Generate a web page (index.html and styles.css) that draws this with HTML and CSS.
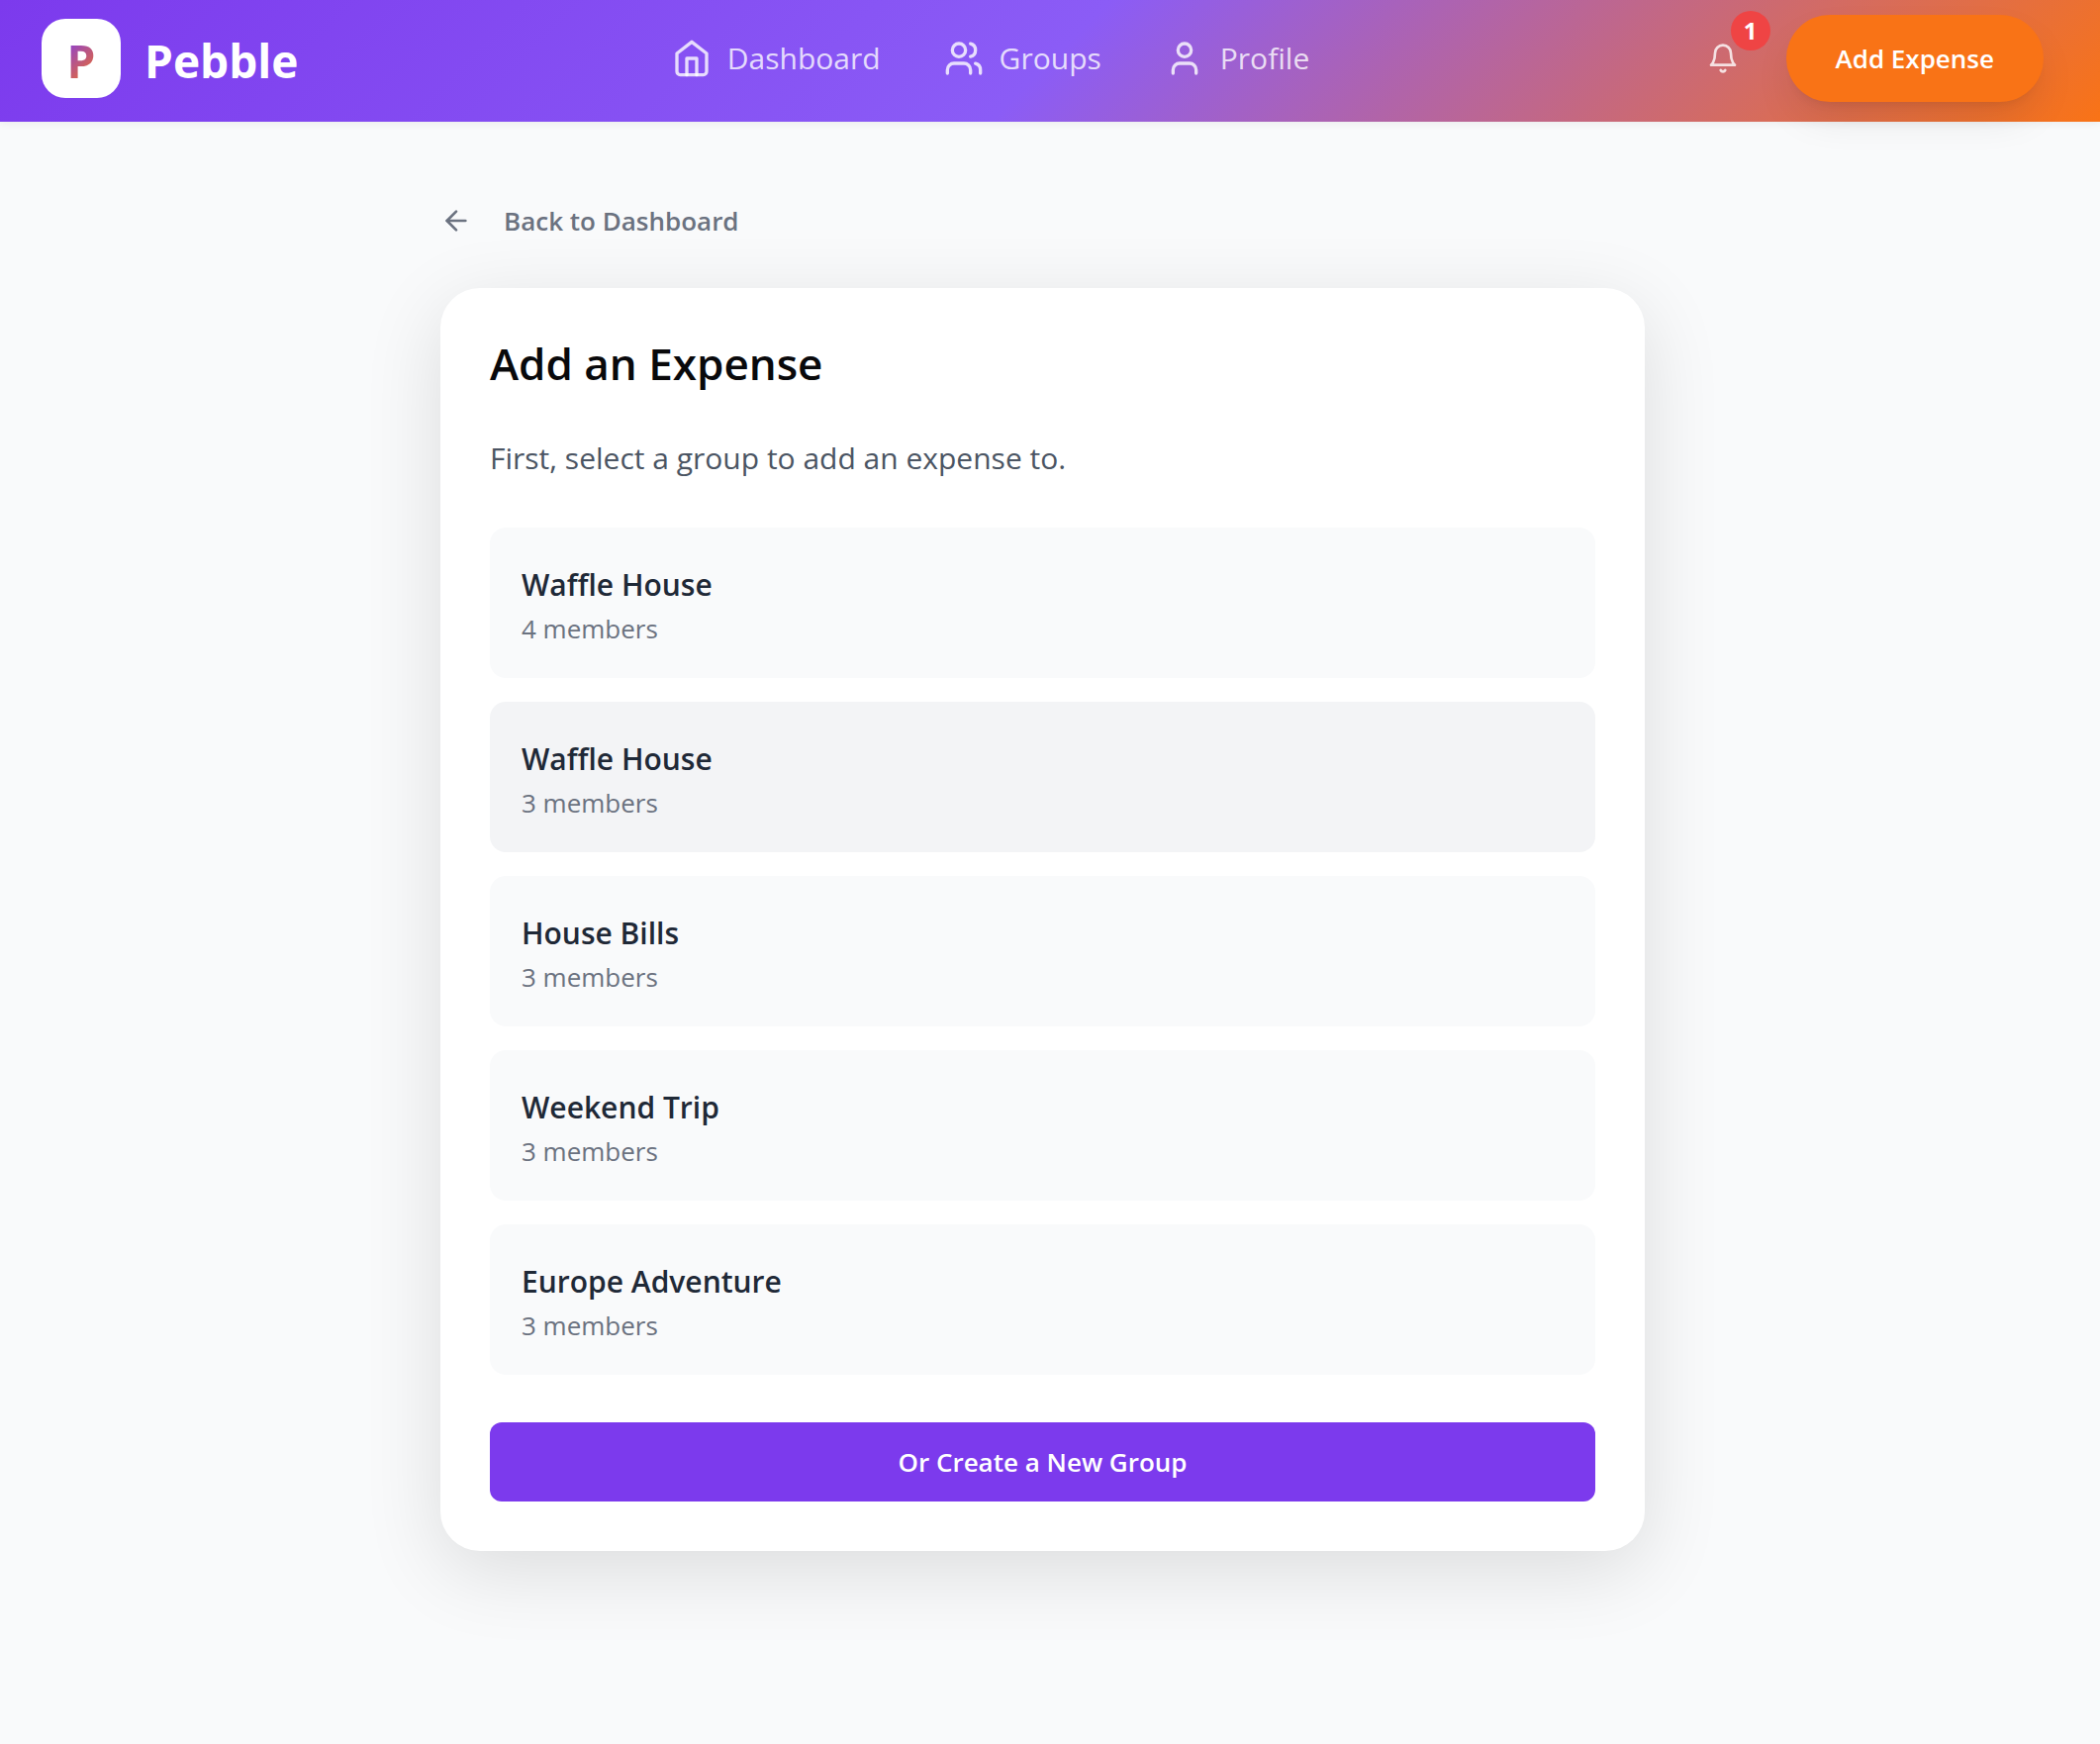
FILE: index.html
```html
<!DOCTYPE html>
<html lang="en">
<head>
  <meta charset="UTF-8" />
  <meta name="viewport" content="width=device-width, initial-scale=1.0"/>
  <title>Pebble - Add an Expense</title>
  <link rel="stylesheet" href="styles.css">
</head>
<body>
  <header class="navbar">
    <a class="brand" href="#">
      <span class="brand-mark"><span class="brand-letter">P</span></span>
      <span class="brand-name">Pebble</span>
    </a>

    <nav class="nav-links">
      <a href="#">
        <svg class="icon" viewBox="0 0 24 24" aria-hidden="true"><path d="m3 9 9-7 9 7v11a2 2 0 0 1-2 2H5a2 2 0 0 1-2-2z"/><polyline points="9 22 9 12 15 12 15 22"/></svg>
        Dashboard
      </a>
      <a href="#">
        <svg class="icon" viewBox="0 0 24 24" aria-hidden="true"><path d="M16 21v-2a4 4 0 0 0-4-4H6a4 4 0 0 0-4 4v2"/><circle cx="9" cy="7" r="4"/><path d="M22 21v-2a4 4 0 0 0-3-3.87"/><path d="M16 3.13a4 4 0 0 1 0 7.75"/></svg>
        Groups
      </a>
      <a href="#">
        <svg class="icon" viewBox="0 0 24 24" aria-hidden="true"><path d="M19 21v-2a4 4 0 0 0-4-4H9a4 4 0 0 0-4 4v2"/><circle cx="12" cy="7" r="4"/></svg>
        Profile
      </a>
    </nav>

    <div class="nav-actions">
      <button class="bell" type="button" aria-label="Notifications">
        <svg class="icon icon-sm" viewBox="0 0 24 24" aria-hidden="true"><path d="M6 8a6 6 0 0 1 12 0c0 7 3 9 3 9H3s3-2 3-9"/><path d="M10.3 21a1.94 1.94 0 0 0 3.4 0"/></svg>
        <span class="badge">1</span>
      </button>
      <button class="btn-expense" type="button">Add Expense</button>
    </div>
  </header>

  <main class="page">
    <div class="content">
      <a class="back-link" href="#">
        <svg class="icon icon-sm" viewBox="0 0 24 24" aria-hidden="true"><path d="m12 19-7-7 7-7"/><path d="M19 12H5"/></svg>
        Back to Dashboard
      </a>

      <section class="card">
        <h1>Add an Expense</h1>
        <p class="intro">First, select a group to add an expense to.</p>

        <div class="group-list">
          <button class="group" type="button">
            <span class="group-name">Waffle House</span>
            <span class="group-members">4 members</span>
          </button>
          <button class="group active" type="button">
            <span class="group-name">Waffle House</span>
            <span class="group-members">3 members</span>
          </button>
          <button class="group" type="button">
            <span class="group-name">House Bills</span>
            <span class="group-members">3 members</span>
          </button>
          <button class="group" type="button">
            <span class="group-name">Weekend Trip</span>
            <span class="group-members">3 members</span>
          </button>
          <button class="group" type="button">
            <span class="group-name">Europe Adventure</span>
            <span class="group-members">3 members</span>
          </button>
        </div>

        <button class="btn-create" type="button">Or Create a New Group</button>
      </section>
    </div>
  </main>
</body>
</html>
```

FILE: styles.css
```css
* {
  box-sizing: border-box;
}
body {
  margin: 0;
  font-family: "Segoe UI", "Open Sans", "Noto Sans", sans-serif;
  font-size: 30px;
  line-height: 48px;
  background: #f9fafb;
  color: #09090b;
}
a {
  color: inherit;
  text-decoration: none;
}
button {
  font: inherit;
  color: inherit;
  border: none;
  padding: 0;
  background: none;
  cursor: pointer;
}
.icon {
  width: 40px;
  height: 40px;
  flex: none;
  fill: none;
  stroke: currentColor;
  stroke-width: 2;
  stroke-linecap: round;
  stroke-linejoin: round;
}
.icon-sm {
  width: 32px;
  height: 32px;
}

/* Navbar */
.navbar {
  display: flex;
  align-items: center;
  justify-content: space-between;
  min-height: 123px;
  padding: 0 57px 5px 42px;
  background: linear-gradient(135deg, #7c3aed 0%, #8b5cf6 50%, #f97316 100%);
  box-shadow: 0 2px 8px rgba(0, 0, 0, 0.06);
  color: white;
}
.brand {
  display: flex;
  align-items: center;
  gap: 24px;
  font-size: 46px;
  font-weight: 700;
}
.brand-mark {
  display: flex;
  align-items: center;
  justify-content: center;
  width: 80px;
  height: 80px;
  border-radius: 24px;
  background: white;
}
.brand-letter,
.brand-name {
  padding-top: 4px;
}
.brand-letter {
  background: linear-gradient(135deg, #7c3aed, #f97316);
  background-clip: text;
  -webkit-background-clip: text;
  color: transparent;
}
.nav-links {
  display: flex;
  gap: 64px;
}
.nav-links a {
  display: flex;
  align-items: center;
  gap: 16px;
  color: rgba(255, 255, 255, 0.8);
}
.nav-actions {
  display: flex;
  align-items: center;
  gap: 24px;
}
.bell {
  position: relative;
  display: flex;
  padding: 24px;
  color: rgba(255, 255, 255, 0.8);
}
.badge {
  position: absolute;
  top: -8px;
  right: -8px;
  width: 40px;
  height: 40px;
  border-radius: 50%;
  background: #ef4444;
  color: white;
  font-size: 24px;
  font-weight: 700;
  line-height: 40px;
  text-align: center;
}
.btn-expense {
  height: 88px;
  padding: 0 50px;
  border-radius: 44px;
  background: #f97316;
  box-shadow: 0 20px 40px -6px rgba(0, 0, 0, 0.1), 0 8px 12px -8px rgba(0, 0, 0, 0.1);
  font-size: 26px;
  font-weight: 600;
}

/* Page */
.page {
  padding: 76px 15px 195px 0;
}
.content {
  max-width: 1217px;
  margin: 0 auto;
}
.back-link {
  display: inline-flex;
  align-items: center;
  gap: 32px;
  margin-bottom: 44px;
  color: #6b7280;
  font-size: 26px;
  font-weight: 600;
}
.card {
  padding: 50px;
  border-radius: 40px;
  background: white;
  box-shadow: 0 20px 80px rgba(0, 0, 0, 0.12);
}
h1 {
  margin: 0 0 46px;
  font-size: 44px;
  font-weight: 600;
  line-height: 52px;
}
.intro {
  margin: 0 0 46px;
  color: #4b5563;
}
.group-list {
  display: flex;
  flex-direction: column;
  gap: 24px;
  margin-bottom: 48px;
}
.group {
  display: flex;
  flex-direction: column;
  padding: 34px 32px 30px;
  border-radius: 16px;
  background: #f9fafb;
  text-align: left;
}
.group.active,
.group:hover {
  background: #f3f4f6;
}
.group-name {
  color: #1f2937;
  font-weight: 600;
}
.group-members {
  color: #6b7280;
  font-size: 26px;
  line-height: 40px;
}
.btn-create {
  width: 100%;
  height: 80px;
  border-radius: 12px;
  background: #7c3aed;
  color: white;
  font-size: 26px;
  font-weight: 600;
}
```
